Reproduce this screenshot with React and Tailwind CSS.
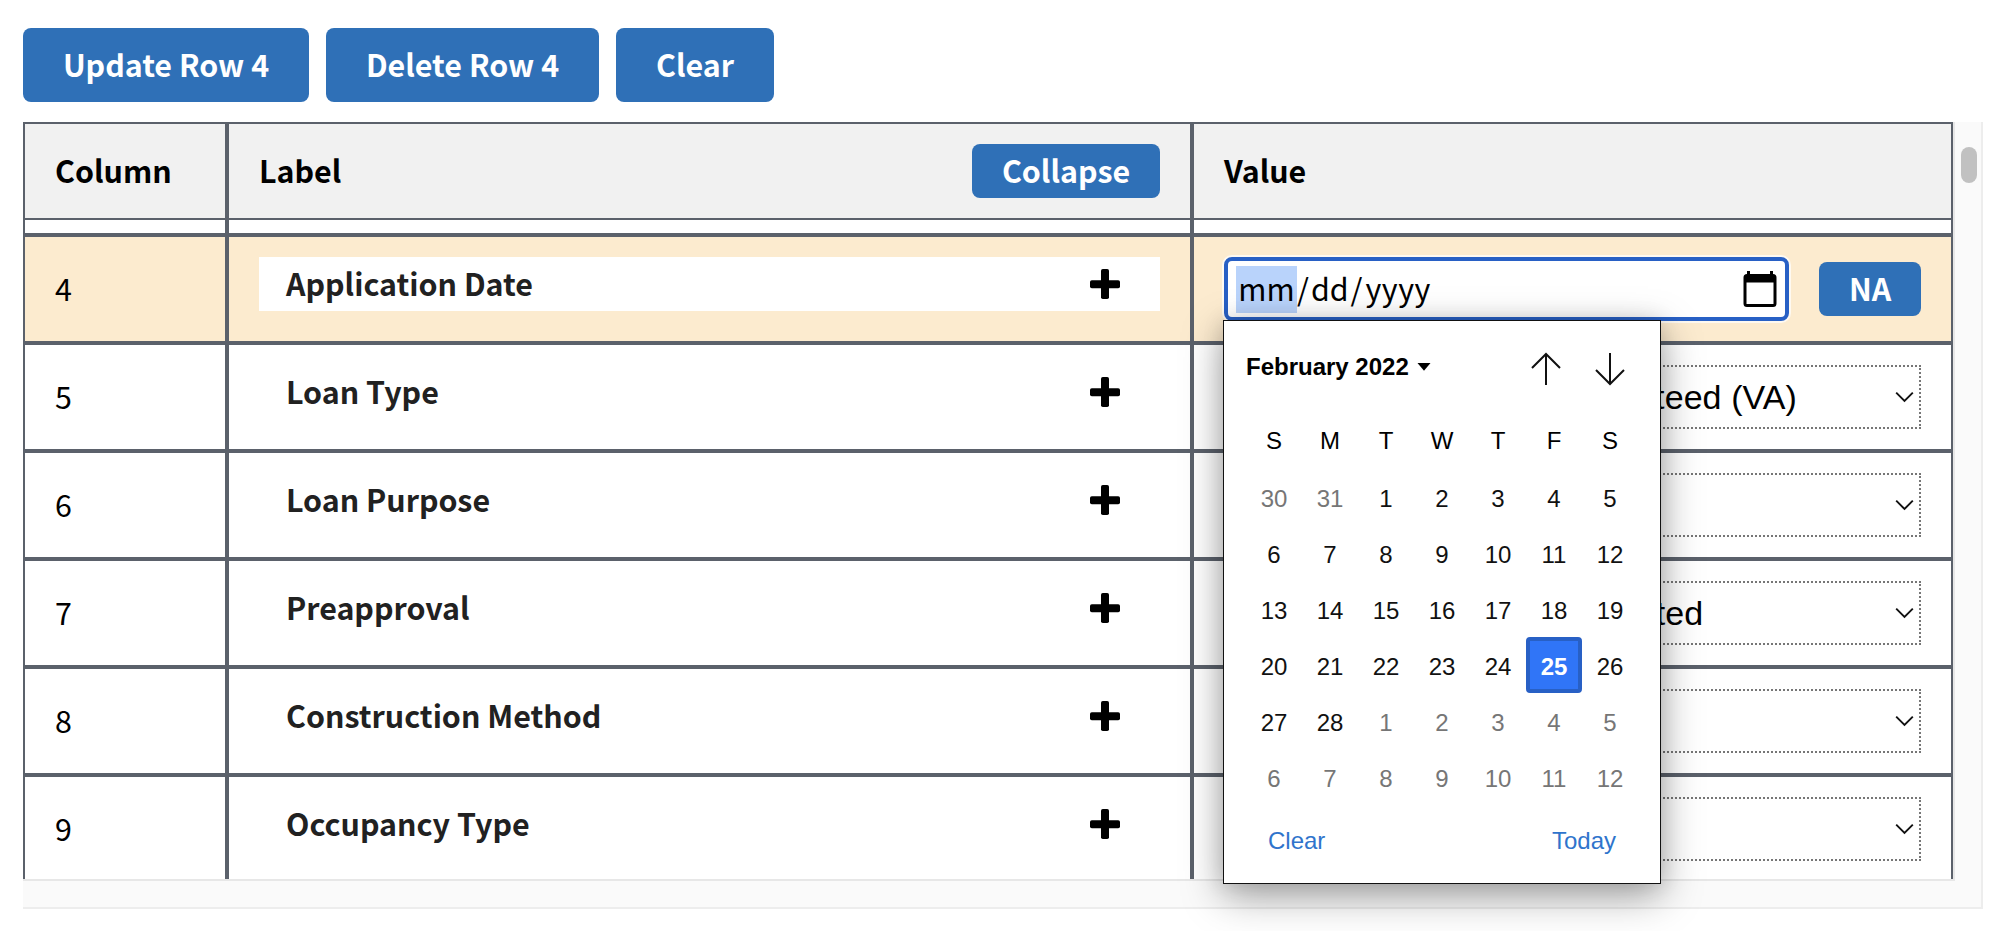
const rows = [
  { id: 5, label: 'Loan Type', value: '3 - Veterans Affairs guaranteed (VA)' },
  { id: 6, label: 'Loan Purpose', value: '' },
  { id: 7, label: 'Preapproval', value: '2 - Preapproval not requested' },
  { id: 8, label: 'Construction Method', value: '' },
  { id: 9, label: 'Occupancy Type', value: '' },
];

const weeks = [
  [30, 31, 1, 2, 3, 4, 5],
  [6, 7, 8, 9, 10, 11, 12],
  [13, 14, 15, 16, 17, 18, 19],
  [20, 21, 22, 23, 24, 25, 26],
  [27, 28, 1, 2, 3, 4, 5],
  [6, 7, 8, 9, 10, 11, 12],
];

function Button({ children, className }) {
  return (
    <button
      className={`flex shrink-0 items-center justify-center rounded-lg bg-[#2f70b7] pb-[3px] font-bold whitespace-nowrap text-white ${className}`}
    >
      {children}
    </button>
  );
}

function Plus() {
  return (
    <svg className="size-[30px]" viewBox="0 0 30 30">
      <rect x="11" y="0" width="8" height="30" rx="1.8" />
      <rect x="0" y="11.2" width="30" height="8" rx="1.8" />
    </svg>
  );
}

function Row({ id, label, active, children }) {
  return (
    <div
      className={`flex h-[108px] shrink-0 border-b-4 border-[#5b616b] ${active ? 'bg-[#fcebcf]' : 'bg-white'}`}
    >
      <div className="flex w-[204px] shrink-0 items-center border-r-4 border-[#5b616b] pb-[2px] pl-[30px]">
        {id}
      </div>
      <div className="w-[965px] shrink-0 border-r-4 border-[#5b616b] px-[30px] pt-5">
        <div className="flex h-[54px] items-center justify-between bg-white pr-10 pl-[27px]">
          <span className="pb-[3px] font-bold text-[#212121]">{label}</span>
          <Plus />
        </div>
      </div>
      <div className="flex grow items-center px-[30px]">{children}</div>
    </div>
  );
}

function Select({ value }) {
  return (
    <div className="flex h-16 w-full items-center justify-between border-2 border-dotted border-[#767676] bg-white pr-[5.5px] pl-[25px] font-['Liberation_Sans',sans-serif] text-[34px] tracking-[0.08px]">
      <span className="whitespace-nowrap">{value}</span>
      <svg className="h-[12px] w-[19px]" viewBox="0 0 19 12" fill="none" stroke="#111" strokeWidth="1.9">
        <path d="M1.2 1.7 9.5 10l8.3-8.3" />
      </svg>
    </div>
  );
}

function DatePicker() {
  return (
    <div className="absolute top-[59px] -left-[5px] z-20 flex h-[564px] w-[438px] flex-col border border-[#111] bg-white pl-[22px] font-['Liberation_Sans',sans-serif] text-2xl leading-[28px] shadow-[0_12px_38px_rgba(0,0,0,0.36),0_0_20px_rgba(0,0,0,0.12)]">
      <div className="flex h-[92px] items-center">
        <span className="font-bold whitespace-nowrap">February 2022</span>
        <svg className="ml-[8px] h-[8px] w-[14px]" viewBox="0 0 14 8">
          <path d="M.5 0h13L7 7.8z" />
        </svg>
        <svg
          className="mt-[4px] ml-[99px] h-[34px] w-[32px]"
          viewBox="0 0 32 34"
          fill="none"
          stroke="#111"
          strokeWidth="2"
        >
          <path d="M16 33V2M2 16 16 2l14 14" />
        </svg>
        <svg
          className="mt-[4px] ml-[32px] h-[34px] w-[32px]"
          viewBox="0 0 32 34"
          fill="none"
          stroke="#111"
          strokeWidth="2"
        >
          <path d="M16 1v31M2 18l14 14 14-14" />
        </svg>
      </div>
      <div className="grid w-[392px] grid-cols-7">
        {['S', 'M', 'T', 'W', 'T', 'F', 'S'].map((day, i) => (
          <div key={i} className="flex h-[56px] items-center justify-center">
            {day}
          </div>
        ))}
        {weeks.flatMap((week, w) =>
          week.map((day, d) => {
            const outside = (w === 0 && day > 7) || (w === 4 && day < 7) || w === 5;
            const selected = w === 3 && day === 25;
            return (
              <div
                key={`${w}-${d}`}
                className={`flex h-[56px] items-center justify-center pt-[4px] ${
                  selected
                    ? 'rounded-[4px] border-4 border-[#2860c5] bg-[#3075f7] font-bold text-white'
                    : outside
                      ? 'text-[#767676]'
                      : 'text-[#111]'
                }`}
              >
                {day}
              </div>
            );
          }),
        )}
      </div>
      <div className="flex w-[392px] justify-between pt-[22px] pr-[22px] pl-[22px] text-[#2f74cc]">
        <span>Clear</span>
        <span>Today</span>
      </div>
    </div>
  );
}

function DateField() {
  return (
    <div className="relative h-16 w-[565px] shrink-0 rounded-lg border-4 border-[#2860c5] bg-white ring-2 ring-white/70">
      <div className="flex h-full items-center pr-[8px] pl-2">
        <span className="flex h-[47px] w-[61px] items-center justify-center bg-[#b9d3fb] pb-[3px]">mm</span>
        <span className="flex grow gap-[2px] pb-[3px]">
          <span>/</span>
          <span>dd</span>
          <span>/</span>
          <span className="pl-px tracking-[0.5px]">yyyy</span>
        </span>
        <svg className="h-[36px] w-[34px]" viewBox="0 0 34 36">
          <path
            fillRule="evenodd"
            d="M4 0h3v3h20V0h3v3a3.500 3.500 0 0 1 3.500 3.500V32.500a3.500 3.500 0 0 1-3.500 3.500H4a3.500 3.500 0 0 1-3.500-3.500V6.500A3.500 3.500 0 0 1 4 3zM3.500 11.500V33h27V11.500z"
          />
        </svg>
      </div>
      <DatePicker />
    </div>
  );
}

export default function App() {
  return (
    <div className="h-[931px] w-[1992px] overflow-hidden bg-white pt-7 pl-[23px] font-['Noto_Sans_CJK_SC','Source_Sans_Pro',sans-serif] text-[30.4px] leading-[44px] text-black">
      <div className="flex gap-[17px]">
        <Button className="h-[74px] w-[286px]">Update Row 4</Button>
        <Button className="h-[74px] w-[273px]">Delete Row 4</Button>
        <Button className="h-[74px] w-[158px]">Clear</Button>
      </div>

      <div className="mt-5 flex h-[787px] w-[1960px] flex-col">
        <div className="flex h-[757px]">
          <div className="flex w-[1930px] flex-col border-x-2 border-[#5b616b]">
            <div className="flex h-[98px] shrink-0 border-y-2 border-[#5b616b] bg-[#f1f1f1] font-bold">
              <div className="flex w-[204px] items-center border-r-4 border-[#5b616b] pb-[3px] pl-[30px]">
                Column
              </div>
              <div className="flex w-[965px] items-center justify-between border-r-4 border-[#5b616b] px-[30px]">
                <span className="pb-[3px]">Label</span>
                <Button className="h-[54px] w-[188px]">Collapse</Button>
              </div>
              <div className="flex items-center pb-[3px] pl-[30px]">Value</div>
            </div>
            <div className="flex h-[17px] shrink-0 border-b-4 border-[#5b616b]">
              <div className="w-[204px] border-r-4 border-[#5b616b]" />
              <div className="w-[965px] border-r-4 border-[#5b616b]" />
            </div>
            <div className="relative z-10">
              <Row id={4} label="Application Date" active>
                <DateField />
                <Button className="ml-[30px] h-[54px] w-[102px]">NA</Button>
              </Row>
            </div>
            <div className="flex min-h-0 grow flex-col overflow-hidden">
              {rows.map((row) => (
                <Row key={row.id} id={row.id} label={row.label}>
                  <Select value={row.value} />
                </Row>
              ))}
            </div>
          </div>
          <div className="flex w-[30px] justify-center border-x-2 border-l-[#e7e7e7] border-r-[#ededed] bg-[#fafafa] pt-[25px] pl-[2px]">
            <div className="h-9 w-4 rounded-full bg-[#c1c1c1]" />
          </div>
        </div>
        <div className="flex h-[30px]">
          <div className="w-[1932px] border-y-2 border-t-[#e7e7e7] border-b-[#ededed] bg-[#fafafa]" />
          <div className="w-[28px] border-r-2 border-b-2 border-[#ededed] bg-[#fafafa]" />
        </div>
      </div>
    </div>
  );
}
